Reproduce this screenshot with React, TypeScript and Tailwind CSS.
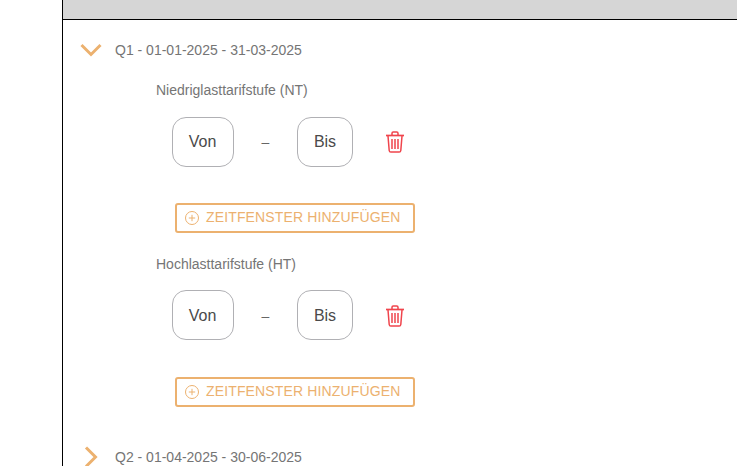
const Trash = () => (
  <svg width="20" height="22" viewBox="0 0 20 22" fill="none" stroke="#f0444c" strokeWidth="1.5" className="block">
    <path d="M1 4.5h18" strokeWidth="1.7" />
    <path d="M7 4V2.2C7 1.5 7.5 1 8.2 1h3.6c.7 0 1.2.5 1.2 1.2V4" />
    <path d="M3 5l1.2 14.5c.1.9.7 1.5 1.6 1.5h8.4c.9 0 1.5-.6 1.6-1.5L17 5" />
    <path d="M7 8v10M10 8v10M13 8v10" />
  </svg>
);

const Plus = () => (
  <svg width="14" height="14" viewBox="0 0 14 14" fill="none" stroke="#ecb16f" strokeWidth="1" className="block">
    <circle cx="7" cy="7" r="6.5" />
    <path d="M7 3.8v6.4M3.8 7h6.4" />
  </svg>
);

const Tariff = ({ title, second }: { title: string; second?: boolean }) => (
  <div className="flex flex-col">
    <div className="ml-[93px] h-5 text-sm leading-5 text-[#757575]">{title}</div>
    <div className={second ? "ml-[109px] mt-4 flex h-[50px] items-center" : "ml-[109px] mt-[17px] flex h-[50px] items-center"}>
      <div className={second ? "flex h-[50px] w-[62px] items-center justify-center rounded-[14px] border border-[#b0b0b4] pr-[1px] pt-[2px] text-base text-[#4a4a4a]" : "flex h-[50px] w-[62px] items-center justify-center rounded-[14px] border border-[#b0b0b4] pr-[1px] text-base text-[#4a4a4a]"}>Von</div>
      <div className={second ? "flex w-[63px] justify-center pt-[2px] text-sm text-[#666666]" : "flex w-[63px] justify-center text-sm text-[#666666]"}>–</div>
      <div className={second ? "flex h-[50px] w-[56px] items-center justify-center rounded-[14px] border border-[#b0b0b4] pt-[2px] text-base text-[#4a4a4a]" : "flex h-[50px] w-[56px] items-center justify-center rounded-[14px] border border-[#b0b0b4] text-base text-[#4a4a4a]"}>Bis</div>
      <div className={second ? "ml-[32px] pt-[2px]" : "ml-[32px]"}><Trash /></div>
    </div>
    <div className={second ? "ml-[112px] mt-[37px] flex h-[30px] w-[240px] items-center rounded-[3px] border-2 border-[#ecb16f] pl-[8px] text-sm tracking-[0.14px] text-[#ecb16f]" : "ml-[112px] mt-9 flex h-[30px] w-[240px] items-center rounded-[3px] border-2 border-[#ecb16f] pl-[8px] text-sm tracking-[0.14px] text-[#ecb16f]"}>
      <Plus />
      <span className="mb-[2px] ml-[7px] whitespace-nowrap">ZEITFENSTER HINZUFÜGEN</span>
    </div>
  </div>
);

export default function App() {
  return (
    <div className="h-[466px] w-[737px] overflow-hidden bg-white font-['Liberation_Sans',Arial,sans-serif]">
      <div className="ml-[62px] h-full border-l border-black">
        <div className="h-5 border-b border-black bg-[#d6d6d6]" />
        <div className="mt-5 flex h-5 items-center">
          <svg width="22" height="14" viewBox="0 0 22 14" fill="none" stroke="#ecb16f" strokeWidth="3" className="ml-[17px] block">
            <path d="M1.5 2 11 11.5 20.5 2" />
          </svg>
          <span className="ml-[13px] text-sm text-[#757575]">Q1 - 01-01-2025 - 31-03-2025</span>
        </div>
        <div className="mt-[20px] flex flex-col gap-[21px]">
          <Tariff title="Niedriglasttarifstufe (NT)" />
          <Tariff title="Hochlasttarifstufe (HT)" second />
        </div>
        <div className="mt-10 flex h-5 items-center">
          <svg width="14" height="22" viewBox="0 0 14 22" fill="none" stroke="#ecb16f" strokeWidth="3" className="ml-[21px] block">
            <path d="M2 1.5 11.5 11 2 20.5" />
          </svg>
          <span className="ml-[17px] text-sm text-[#757575]">Q2 - 01-04-2025 - 30-06-2025</span>
        </div>
      </div>
    </div>
  );
}
